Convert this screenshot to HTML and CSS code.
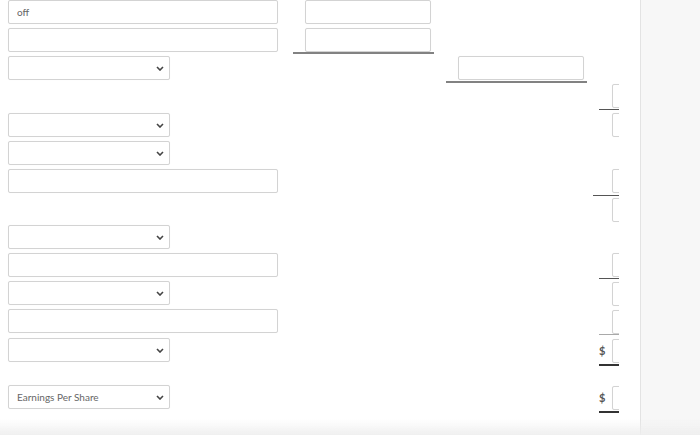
FILE: index.html
```html
<!DOCTYPE html>
<html lang="en">
<head>
<meta charset="utf-8">
<title>Income Statement</title>
<link rel="stylesheet" href="styles.css">
</head>
<body>
<div class="page">
  <main class="sheet">
    <div class="col col-labels">
      <input class="field wide" type="text" value="off">
      <input class="field wide" type="text">
      <div class="select"><select class="field"><option></option></select><svg class="chev" viewBox="0 0 8 5" width="8" height="5"><path d="M1 1l3 3 3-3" fill="none" stroke="#444" stroke-width="1.6"/></svg></div>
      <div class="select sp29"><select class="field"><option></option></select><svg class="chev" viewBox="0 0 8 5" width="8" height="5"><path d="M1 1l3 3 3-3" fill="none" stroke="#444" stroke-width="1.6"/></svg></div>
      <div class="select"><select class="field"><option></option></select><svg class="chev" viewBox="0 0 8 5" width="8" height="5"><path d="M1 1l3 3 3-3" fill="none" stroke="#444" stroke-width="1.6"/></svg></div>
      <input class="field wide" type="text">
      <div class="select sp28"><select class="field"><option></option></select><svg class="chev" viewBox="0 0 8 5" width="8" height="5"><path d="M1 1l3 3 3-3" fill="none" stroke="#444" stroke-width="1.6"/></svg></div>
      <input class="field wide" type="text">
      <div class="select"><select class="field"><option></option></select><svg class="chev" viewBox="0 0 8 5" width="8" height="5"><path d="M1 1l3 3 3-3" fill="none" stroke="#444" stroke-width="1.6"/></svg></div>
      <input class="field wide" type="text">
      <div class="select sp1"><select class="field"><option></option></select><svg class="chev" viewBox="0 0 8 5" width="8" height="5"><path d="M1 1l3 3 3-3" fill="none" stroke="#444" stroke-width="1.6"/></svg></div>
      <div class="select sp19"><select class="field"><option>Earnings Per Share</option></select><svg class="chev" viewBox="0 0 8 5" width="8" height="5"><path d="M1 1l3 3 3-3" fill="none" stroke="#444" stroke-width="1.6"/></svg></div>
    </div>

    <div class="col col-amt col-a">
      <input class="field amt" type="text">
      <input class="field amt mt4" type="text">
      <div class="rule"></div>
    </div>

    <div class="col col-amt col-b">
      <input class="field amt mt56" type="text">
      <div class="rule mt1"></div>
    </div>

    <div class="col col-total">
      <input class="field tbox mt84" type="text">
      <div class="trule mt1"></div>
      <input class="field tbox mt3" type="text">
      <input class="field tbox mt32" type="text">
      <div class="trule long mt2"></div>
      <input class="field tbox mt2" type="text">
      <input class="field tbox mt31" type="text">
      <div class="trule mt1"></div>
      <input class="field tbox mt3" type="text">
      <input class="field tbox mt4" type="text">
      <div class="trule light"></div>
      <div class="money mt3"><span class="dollar">$</span><input class="field tbox flush" type="text"></div>
      <div class="trule thick mt1"></div>
      <div class="money mt19"><span class="dollar">$</span><input class="field tbox flush" type="text"></div>
      <div class="trule thick mt1"></div>
    </div>
  </main>
  <aside class="side"></aside>
</div>
<div class="fade"></div>
</body>
</html>
```

FILE: styles.css
```css
* { box-sizing: border-box; }
html, body { margin: 0; padding: 0; background: #fff; }
body { font-family: Lato, "Open Sans", Arial, sans-serif; overflow: hidden; }

.page { display: flex; width: 700px; height: 435px; }
.sheet { display: flex; width: 640px; height: 435px; align-items: flex-start; }
.side { width: 60px; height: 435px; background: #f7f7f7; border-left: 1px solid #e3e3e3; }

.col { display: flex; flex-direction: column; }
.col-labels { width: 278px; padding-left: 8px; gap: 4px; }
.col-amt { width: 141px; }
.col-a { margin-left: 15px; }
.col-b { margin-left: 12px; }
.col-total { width: 29px; margin-left: 3px; overflow: hidden; height: 435px; }

.field {
  display: block;
  height: 24px;
  margin: 0;
  border: 1px solid #d3d3d3;
  border-radius: 2px;
  background: #fff;
  box-shadow: 0 0 1px rgba(0,0,0,0.06);
  font-family: Lato, "Open Sans", Arial, sans-serif;
  font-size: 10px;
  color: #666;
  padding: 0 8px;
  outline: none;
}
.wide { width: 270px; }

.select { position: relative; width: 162px; height: 24px; }
.select select { width: 162px; appearance: none; -webkit-appearance: none; padding-left: 8px; }
.chev { position: absolute; right: 6px; top: 10px; }

.amt { width: 126px; margin-left: 12px; }
.rule { height: 2px; background: #5a5a5a; width: 141px; transform: scaleY(0.75); }

.tbox { width: 126px; margin-left: 22px; flex: none; }
.tbox.flush { margin-left: 7px; }
.trule { height: 1px; background: #555; margin-left: 9px; width: 40px; flex: none; }
.trule.long { margin-left: 3px; }
.trule.light { background: #a9a9a9; }
.trule.thick { height: 2px; background: #333; }
.money { display: flex; align-items: center; margin-left: 9px; flex: none; }
.dollar { font-size: 11px; font-weight: 700; color: #555; width: 6px; line-height: 24px; padding-top: 1px; }

.sp29 { margin-top: 29px; }
.sp28 { margin-top: 28px; }
.sp1 { margin-top: 1px; }
.sp19 { margin-top: 19px; }

.mt1 { margin-top: 1px; }
.mt2 { margin-top: 2px; }
.mt3 { margin-top: 3px; }
.mt4 { margin-top: 4px; }
.mt19 { margin-top: 19px; }
.mt31 { margin-top: 31px; }
.mt32 { margin-top: 32px; }
.mt56 { margin-top: 56px; }
.mt84 { margin-top: 84px; }

.fade {
  position: fixed;
  left: 0; right: 0; bottom: 0;
  height: 16px;
  background: linear-gradient(to bottom, rgba(240,240,240,0), rgba(238,238,238,0.9));
  pointer-events: none;
}
```
